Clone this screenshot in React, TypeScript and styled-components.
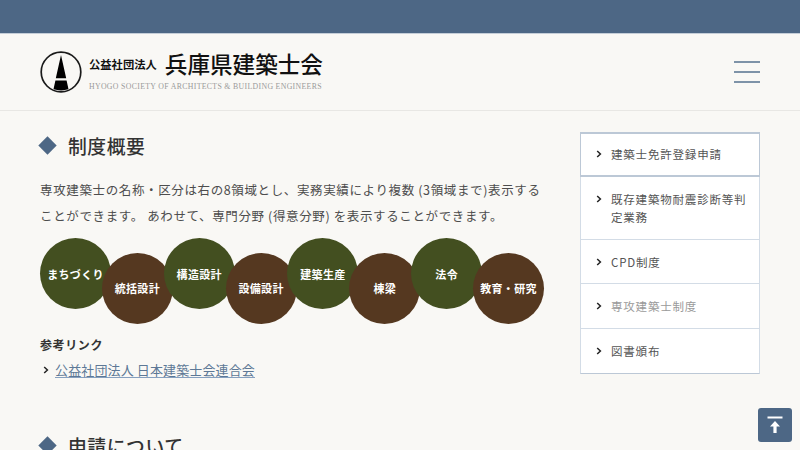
import React from 'react'
import styled, { createGlobalStyle } from 'styled-components'

const colors = {
  navy: '#4d6785',
  bg: '#f9f8f5',
  text: '#4a4a4a',
  green: '#434f20',
  brown: '#553820',
  line: '#d3dce6',
}

const GlobalStyle = createGlobalStyle`
  html, body {
    margin: 0;
    height: 450px;
    overflow: hidden;
    background: ${colors.bg};
    font-family: "Noto Sans CJK JP", "Noto Sans", sans-serif;
    color: ${colors.text};
  }
`

const fields = [
  { label: 'まちづくり', low: false },
  { label: '統括設計', low: true },
  { label: '構造設計', low: false },
  { label: '設備設計', low: true },
  { label: '建築生産', low: false },
  { label: '棟梁', low: true },
  { label: '法令', low: false },
  { label: '教育・研究', low: true },
]

const sideLinks = [
  { label: '建築士免許登録申請', first: true },
  { label: '既存建築物耐震診断等判定業務' },
  { label: 'CPD制度' },
  { label: '専攻建築士制度', current: true },
  { label: '図書頒布' },
]

const Chevron = () => (
  <S.Chevron viewBox="0 0 6 8">
    <path d="M1.2 1 L4.4 4 L1.2 7" fill="none" stroke="#222" strokeWidth="1.5" />
  </S.Chevron>
)

const Logo = () => (
  <svg width="44" height="44" viewBox="0 0 44 44">
    <circle cx="22" cy="22" r="19.8" fill="none" stroke="#1a1a1a" strokeWidth="1.7" />
    <path d="M22 5 L27.2 28.3 H16.8 Z M16.4 30.5 H27.6 L29.5 39.3 Q22 41.6 14.5 39.3 Z" fill="#000" />
  </svg>
)

export default function App() {
  return (
    <S.Page>
      <GlobalStyle />
      <S.TopBar />
      <S.Header>
        <S.Brand>
          <Logo />
          <S.BrandText>
            <S.BrandTitle>
              <S.BrandCorp>公益社団法人</S.BrandCorp>
              <S.BrandName>兵庫県建築士会</S.BrandName>
            </S.BrandTitle>
            <S.BrandEn>HYOGO SOCIETY OF ARCHITECTS &amp; BUILDING ENGINEERS</S.BrandEn>
          </S.BrandText>
        </S.Brand>
        <S.Burger>
          <span />
          <span />
          <span />
        </S.Burger>
      </S.Header>
      <S.Body>
        <S.Main>
          <S.Heading>
            <S.Diamond />
            制度概要
          </S.Heading>
          <S.Lead>
            専攻建築士の名称・区分は右の8領域とし、実務実績により複数 (3領域まで)表示することができます。 あわせて、専門分野 (得意分野) を表示することができます。
          </S.Lead>
          <S.Circles>
            {fields.map(f => (
              <S.Circle key={f.label} $low={f.low}>{f.label}</S.Circle>
            ))}
          </S.Circles>
          <S.RefTitle>参考リンク</S.RefTitle>
          <S.RefRow>
            <Chevron />
            <S.RefLink href="#">公益社団法人 日本建築士会連合会</S.RefLink>
          </S.RefRow>
          <S.Heading $next>
            <S.Diamond />
            申請について
          </S.Heading>
        </S.Main>
        <S.Side>
          {sideLinks.map(l => (
            <S.SideItem key={l.label} $first={l.first} $current={l.current}>
              <Chevron />
              <span>{l.label}</span>
            </S.SideItem>
          ))}
        </S.Side>
      </S.Body>
      <S.ToTop aria-label="top">
        <svg width="16" height="18" viewBox="0 0 16 18">
          <path d="M0.5 1.5 H15.5" stroke="#fff" strokeWidth="2" />
          <path d="M8 5 L13 10.5 H9.6 V17 H6.4 V10.5 H3 Z" fill="#fff" />
        </svg>
      </S.ToTop>
    </S.Page>
  )
}

const S = {
  Page: styled.div`
    position: relative;
    width: 800px;
    height: 450px;
    overflow: hidden;
  `,
  TopBar: styled.div`
    height: 33px;
    background: ${colors.navy};
    border-bottom: 1px solid #c5ced8;
  `,
  Header: styled.header`
    height: 76px;
    padding: 0 40px;
    display: flex;
    align-items: center;
    justify-content: space-between;
    border-bottom: 1px solid #e8e7e4;
  `,
  Brand: styled.div`
    display: flex;
    align-items: center;
    gap: 6px;
    margin-left: -1px;
  `,
  BrandText: styled.div`
    display: flex;
    flex-direction: column;
    gap: 4px;
    padding-bottom: 4px;
  `,
  BrandTitle: styled.div`
    display: flex;
    align-items: center;
    gap: 8px;
    height: 28px;
    color: #111;
  `,
  BrandCorp: styled.span`
    font-size: 11.3px;
    font-weight: 700;
  `,
  BrandName: styled.span`
    font-size: 22.6px;
    font-weight: 500;
    line-height: 28px;
  `,
  BrandEn: styled.div`
    font-family: "Liberation Serif", serif;
    font-size: 7.8px;
    line-height: 9px;
    letter-spacing: 0.042em;
    color: #9a9a9a;
    white-space: nowrap;
  `,
  Burger: styled.div`
    width: 26px;
    display: flex;
    flex-direction: column;
    gap: 8px;
    & > span {
      display: block;
      height: 2px;
      background: #7e93a8;
    }
  `,
  Body: styled.div`
    display: flex;
    align-items: flex-start;
    justify-content: space-between;
    padding: 21px 40px 0;
  `,
  Main: styled.main`
    width: 504px;
  `,
  Heading: styled.h2<{ $next?: boolean }>`
    margin: ${p => (p.$next ? '52px' : '0')} 0 0;
    display: flex;
    align-items: center;
    gap: 13px;
    height: 26px;
    font-size: 18.8px;
    font-weight: 500;
    letter-spacing: 0.03em;
    color: #333;
  `,
  Diamond: styled.i`
    display: block;
    width: 13px;
    height: 13px;
    margin-left: 1px;
    margin-right: 1px;
    background: ${colors.navy};
    transform: rotate(45deg);
  `,
  Lead: styled.p`
    margin: 19px 0 0;
    font-size: 12.5px;
    line-height: 26px;
    letter-spacing: 0.05em;
    color: #4d4d4d;
  `,
  Circles: styled.div`
    display: flex;
    align-items: flex-start;
    margin-top: 9px;
    height: 86px;
  `,
  Circle: styled.div<{ $low?: boolean }>`
    flex: none;
    width: 71px;
    height: 71px;
    border-radius: 50%;
    display: flex;
    align-items: center;
    justify-content: center;
    margin-left: -9.15px;
    margin-top: ${p => (p.$low ? '14.5px' : '0')};
    background: ${p => (p.$low ? colors.brown : colors.green)};
    color: #fff;
    font-size: 11px;
    font-weight: 700;
    letter-spacing: 0.03em;
    white-space: nowrap;
    &:first-child {
      margin-left: 0;
    }
  `,
  RefTitle: styled.div`
    margin-top: 12px;
    font-size: 12px;
    font-weight: 700;
    line-height: 18px;
    letter-spacing: 0.05em;
    color: #333;
  `,
  RefRow: styled.div`
    display: flex;
    align-items: center;
    gap: 6px;
    margin-top: 6px;
    margin-left: 3px;
    line-height: 20px;
  `,
  RefLink: styled.a`
    font-size: 13px;
    letter-spacing: 0.01em;
    color: #5d7896;
    text-decoration: underline;
    text-decoration-color: #86a0bf;
    text-underline-offset: 2px;
  `,
  Chevron: styled.svg`
    flex: none;
    width: 6px;
    height: 8px;
  `,
  Side: styled.nav`
    width: 180px;
    flex: none;
    background: #fff;
    border: 1px solid ${colors.line};
    border-bottom-color: #bcc8d6;
    box-sizing: border-box;
  `,
  SideItem: styled.div<{ $first?: boolean; $current?: boolean }>`
    display: flex;
    align-items: flex-start;
    gap: 9px;
    padding: 13px 12px 12.6px 15px;
    border-bottom: 1px solid ${colors.line};
    font-size: 11.5px;
    line-height: 18px;
    letter-spacing: 0.07em;
    color: ${p => (p.$current ? '#9a9a9a' : '#555')};
    ${p => p.$first && `
      margin: -1px -1px 0;
      padding: 11px 13px 12px 15px;
      border: 1px solid #bcc8d6;
      border-top-width: 2px;
      border-bottom-width: 2px;
    `}
    & > svg {
      margin-top: 5px;
    }
    &:last-child {
      border-bottom: none;
      padding-bottom: 13.6px;
    }
  `,
  ToTop: styled.button`
    position: absolute;
    right: 8px;
    bottom: 8px;
    width: 34px;
    height: 34px;
    padding: 0;
    border: none;
    border-radius: 3px;
    background: ${colors.navy};
    display: flex;
    align-items: center;
    justify-content: center;
  `,
}
